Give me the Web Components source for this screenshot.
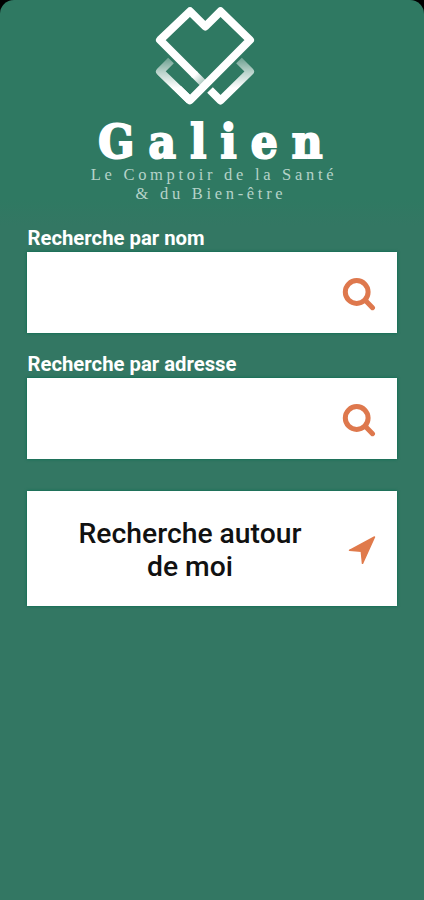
<!DOCTYPE html>
<html lang="fr">
<head>
<meta charset="utf-8">
<title>Galien</title>
<style>
html, body { margin: 0; background: #000; }
</style>
</head>
<body>
<galien-app></galien-app>
<script>
function define(name, html) {
  const template = document.createElement('template');
  template.innerHTML = html;
  customElements.define(name, class extends HTMLElement {
    constructor() {
      super();
      this.attachShadow({ mode: 'open' }).append(template.content.cloneNode(true));
    }
  });
}

define('galien-logo', `
<style>
:host { display: flex; flex-direction: column; align-items: center; height: 206px; color: #fff; white-space: nowrap; }
svg { display: block; width: 104px; height: 108px; margin-left: -14px; }
.name { font: bold 47px/55px "DejaVu Serif Condensed", "DejaVu Serif", serif; font-stretch: condensed; letter-spacing: 14.2px; -webkit-text-stroke: 2px #fff; margin: 6px 0 0 11px; height: 55px; }
.tag { font: 16.5px/19px "Liberation Serif", serif; letter-spacing: 3.7px; color: #b5d3c9; text-align: center; margin: -4px 0 0 4px; }
.tag span { display: block; padding-right: 6px; }
</style>
<svg viewBox="153 0 104 108" fill="none" stroke-width="8" stroke-linejoin="round">
  <defs>
    <linearGradient id="fade" gradientUnits="userSpaceOnUse" x1="0" y1="60" x2="0" y2="88">
      <stop offset="0" stop-color="#fff" stop-opacity=".35"/><stop offset=".4" stop-color="#fff" stop-opacity=".65"/><stop offset="1" stop-color="#fff"/>
    </linearGradient>
    <linearGradient id="shade" gradientUnits="userSpaceOnUse" x1="195" y1="75" x2="203" y2="83">
      <stop offset="0" stop-color="#fff"/><stop offset="1" stop-color="#a9c7bd"/>
    </linearGradient>
  </defs>
  <path d="M171 60.500L160 71.500L190 100.500M239 60.500L250 71.500L220.500 100.500L210 90" stroke="url(#fade)"/>
  <path d="M194 74L203 83" stroke="url(#shade)"/>
  <path d="M195 75L160 40L190 11.300L205.300 26.500L220.500 11.300L250 40L190 100.300L178 88.500" stroke="#fff"/>
</svg>
<div class="name">Galien</div>
<div class="tag">Le Comptoir de la Santé<span>&amp; du Bien-être</span></div>
`);

define('search-icon', `
<style>:host { display: block; width: 34px; height: 34px; } svg { display: block; }</style>
<svg width="34" height="34" viewBox="0 0 34 34" fill="none" stroke="#de784d">
  <circle cx="14.700" cy="14" r="11.400" stroke-width="5"/>
  <path d="M23.500 22.500L30.500 29.700" stroke-width="5" stroke-linecap="round"/>
</svg>`);

define('arrow-icon', `
<style>:host { display: block; width: 28px; height: 29px; } svg { display: block; }</style>
<svg width="28" height="29" viewBox="0 0 28 29"><path d="M26.500 2L14.500 28.500L13.300 16.300L1.500 15.300Z" fill="#e07a4b" stroke="#e07a4b" stroke-width="1.500" stroke-linejoin="round"/></svg>`);

define('search-field', `
<style>
:host { display: block; }
.label { font: 700 20.3px/28px Roboto, sans-serif; color: #fff; height: 28px; padding-left: .5px; }
.box { display: flex; align-items: center; justify-content: flex-end; box-sizing: border-box; height: 81px; padding: 4px 21px 0 0; background: #fff; box-shadow: 0 0 3px #00694e; }
</style>
<div class="label"><slot></slot></div>
<div class="box"><search-icon></search-icon></div>`);

define('nearby-button', `
<style>
:host { display: flex; align-items: center; box-sizing: border-box; height: 115px; padding: 2px 21px 0 37px; background: #fff; box-shadow: 0 0 3px #00694e; }
.text { width: 252px; text-align: center; font: 500 28.3px/33px Roboto, sans-serif; color: #111; }
arrow-icon { margin-left: auto; }
</style>
<div class="text"><slot></slot></div><arrow-icon></arrow-icon>`);

define('galien-app', `
<style>
:host { display: block; box-sizing: border-box; height: 900px; border-radius: 14px 14px 0 0; overflow: hidden; background: linear-gradient(#2f7962 0, #2f7962 200px, #337763 225px); }
main { display: flex; flex-direction: column; padding: 18px 27px 0; }
search-field + search-field { margin-top: 17px; }
nearby-button { margin-top: 32px; }
</style>
<galien-logo></galien-logo>
<main>
  <search-field>Recherche par nom</search-field>
  <search-field>Recherche par adresse</search-field>
  <nearby-button>Recherche autour<br>de moi</nearby-button>
</main>`);
</script>
</body>
</html>
